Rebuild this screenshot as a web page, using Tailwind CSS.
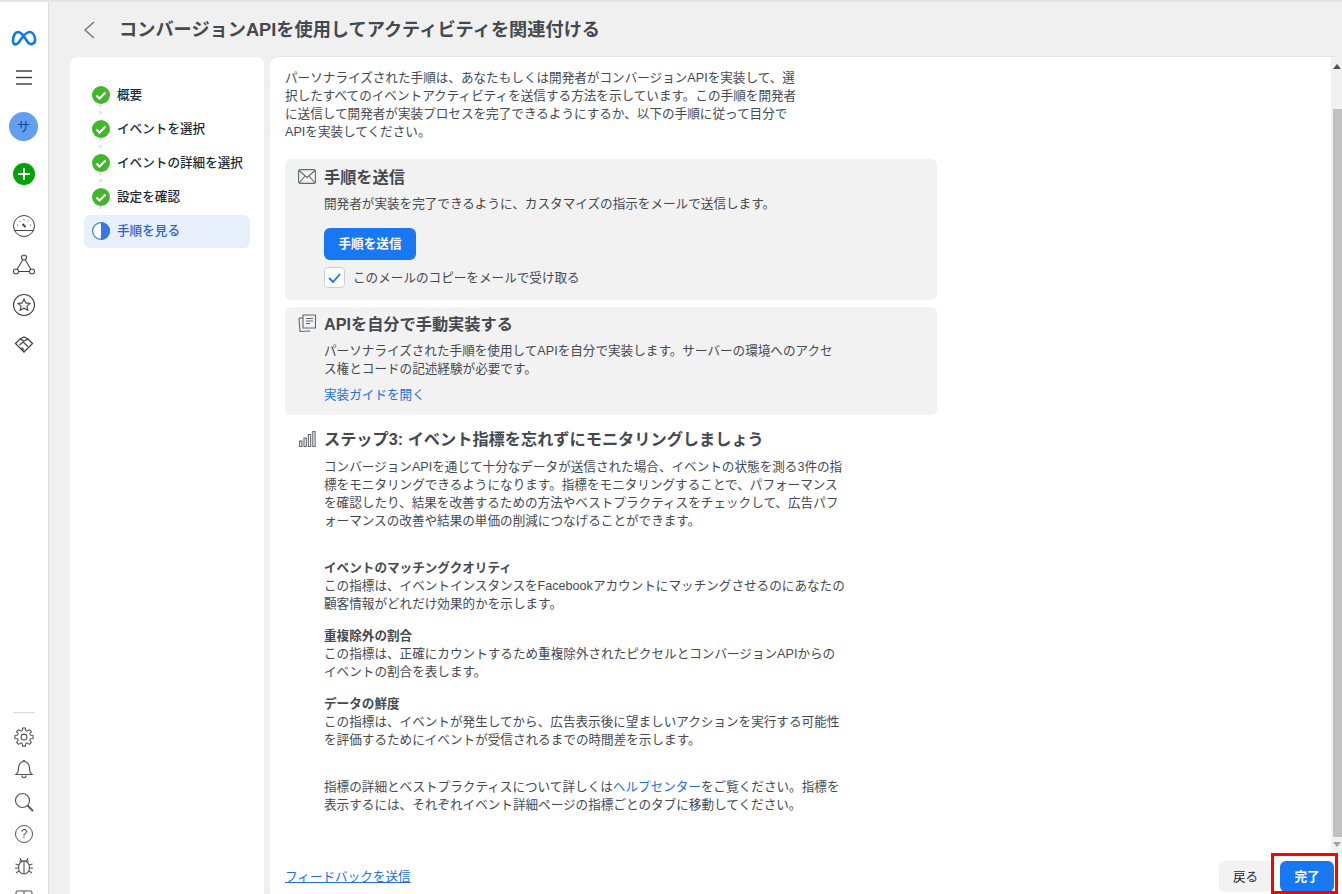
<!doctype html>
<html lang="ja">
<head>
<meta charset="UTF-8">
<title>コンバージョンAPI</title>
<script src="https://cdn.jsdelivr.net/npm/@tailwindcss/browser@4"></script>
</head>
<body class="h-[894px] w-[1342px] overflow-hidden bg-[#f0f0f0] font-['Liberation_Sans','Noto_Sans_CJK_JP',sans-serif] text-[12.6px] leading-[18px] text-[#1c2b33]">
<div class="flex h-full border-t-2 border-[#e4e4e4]">

  <!-- left nav -->
  <nav class="flex w-[49px] shrink-0 flex-col items-center border-r border-[#d9dadb] bg-white">
    <svg class="mt-[28px] h-[16px] w-[26px]" viewBox="0 0 26 16" fill="none" stroke="#0a78f0" stroke-width="2.600"><path d="M2 11C2 5 4.500 2 7 2c3 0 5 3 10 10.500 1.500 1.500 2.500 2 4 1.500 2-.5 3.500-2.500 3-5.500C23.500 4.500 21 2 18.500 2 15 2 12 6 8 12c-1.500 2-2.500 2.500-3.500 2.500C3 14.500 2 13 2 11z"/></svg>
    <svg class="mt-[24px] h-[15px] w-[16px]" viewBox="0 0 16 15" stroke="#444" stroke-width="1.600"><path d="M0 1h16M0 7.500h16M0 14h16"/></svg>
    <div class="mt-[27px] mr-px flex h-[29px] w-[29px] items-center justify-center rounded-full bg-[#629ff0] text-[13px] text-[#0c4a9a]">サ</div>
    <div class="mt-[22px] flex h-[22px] w-[22px] items-center justify-center rounded-full bg-[#00a400]">
      <svg class="h-[12px] w-[12px]" viewBox="0 0 12 12" stroke="#fff" stroke-width="2"><path d="M6 0v12M0 6h12"/></svg>
    </div>
    <svg class="mt-[29px] h-[24px] w-[24px]" viewBox="0 0 24 24" fill="none" stroke="#444" stroke-width="1"><circle cx="12" cy="12" r="10.500"/><path d="M2 16.500h20"/><path d="M10.500 10l3 3" stroke-width="2"/><path d="M5 11l1 .3M7.500 7l.8.8M12 5v1M16.500 7l-.8.8M19 11l-1 .3"/></svg>
    <svg class="mt-[15px] h-[24px] w-[24px]" viewBox="0 0 24 24" fill="none" stroke="#444" stroke-width="1.100"><circle cx="12" cy="4.500" r="2.500"/><circle cx="4" cy="18.500" r="2.500"/><circle cx="20" cy="18.500" r="2.500"/><path d="M10.800 6.700L5.200 16.300M13.200 6.700l5.600 9.600M6.500 18.500h11"/></svg>
    <svg class="mt-[16px] h-[24px] w-[24px]" viewBox="0 0 24 24" fill="none" stroke="#444" stroke-width="1.100"><circle cx="12" cy="12" r="10.500"/><path d="M12 6l1.800 3.900 4.200.5-3.100 2.800.9 4.100-3.800-2.100-3.800 2.100.9-4.100L6 10.400l4.200-.5z"/></svg>
    <svg class="mt-[17px] h-[22px] w-[22px]" viewBox="0 0 22 22" fill="none" stroke="#444" stroke-width="1.300"><path d="M2.500 9.500L7 5l4 2 4-2 4.500 4.500L11 18z"/><path d="M7 5l4-2 4 2M6.500 11L10 8l5 4.500M8.500 13.500L11 16"/></svg>

    <div class="mt-auto mb-[-12px] flex flex-col items-center">
      <div class="mb-[14px] h-px w-[22px] bg-[#d9dadb]"></div>
      <svg class="h-[20px] w-[20px]" viewBox="0 0 24 24" fill="none" stroke="#555" stroke-width="1.300" stroke-linejoin="round"><circle cx="12" cy="12" r="3.500"/><path d="M9.800 4.300L10.300 1.100H13.700L14.200 4.300 15.900 5 18.500 3.100 20.900 5.500 19 8.100 19.700 9.800 22.900 10.300V13.700L19.700 14.200 19 15.900 20.900 18.500 18.500 20.900 15.900 19 14.200 19.700 13.700 22.900H10.300L9.800 19.700 8.100 19 5.500 20.900 3.100 18.500 5 15.900 4.300 14.200 1.100 13.700V10.300L4.300 9.800 5 8.100 3.100 5.500 5.500 3.100 8.100 5z"/></svg>
      <svg class="mt-[12px] h-[20px] w-[20px]" viewBox="0 0 20 20" fill="none" stroke="#555" stroke-width="1.200"><path d="M2 15.500c2-1.500 2.500-3 2.500-6.500 0-3.500 2.500-6.500 5.500-6.500s5.500 3 5.500 6.500c0 3.500.5 5 2.500 6.500z"/><path d="M8 16.500c0 1.500 1 2.200 2 2.200s2-.7 2-2.200M9 2.500a1 1 0 0 1 2 0"/></svg>
      <svg class="mt-[13px] h-[20px] w-[20px]" viewBox="0 0 20 20" fill="none" stroke="#555" stroke-width="1.200"><circle cx="8.500" cy="8.500" r="7"/><path d="M13.500 13.500L19 19" stroke-width="1.800"/></svg>
      <div class="mt-[13px] flex h-[18px] w-[18px] items-center justify-center rounded-full border border-[#555] text-[12px] leading-none text-[#555]">?</div>
      <svg class="mt-[13px] h-[20px] w-[20px]" viewBox="0 0 20 20" fill="none" stroke="#555" stroke-width="1.100"><ellipse cx="10" cy="11.500" rx="5.500" ry="6.500"/><path d="M10 6v12M5 5h10M6 2l1.500 3M14 2l-1.500 3M1.500 8l3.500 1M18.500 8L15 9M1 12h3.500M19 12h-3.500M2 17l3-2M18 17l-3-2"/></svg>
      <svg class="mt-[14px] h-[16px] w-[20px]" viewBox="0 0 20 16" fill="none" stroke="#555" stroke-width="1.100"><rect x="2" y="1" width="16" height="14" rx="1.500"/><path d="M10 1v14M2 5h16"/></svg>
    </div>
  </nav>

  <!-- page -->
  <div class="flex min-w-0 flex-1 flex-col">
    <header class="flex h-[55px] shrink-0 items-center pl-[34px]">
      <svg class="h-[18px] w-[12px]" viewBox="0 0 12 18" fill="none" stroke="#6b7075" stroke-width="1.300"><path d="M11 1L2 9l9 8"/></svg>
      <h1 class="ml-[24px] text-[18.2px] font-bold text-[#444950]">コンバージョンAPIを使用してアクティビティを関連付ける</h1>
    </header>

    <div class="flex min-h-0 flex-1 pl-[21px]">
      <!-- steps -->
      <aside class="w-[194px] shrink-0 rounded-t-lg bg-white pl-[14px] pr-[14px] pt-[21px]">
        <ul class="font-medium">
          <li class="relative flex h-[34px] items-center gap-[7px] pl-[8px]">
            <svg class="h-[18px] w-[18px]" viewBox="0 0 18 18"><circle cx="9" cy="9" r="9" fill="#42b72a"/><path d="M4.500 9.500l3 3 6-6" fill="none" stroke="#fff" stroke-width="2"/></svg>概要
            <span class="absolute top-[26px] left-[15px] h-[3px] w-[3px] rounded-full bg-[#dcdee0]"></span>
            <span class="absolute top-[33px] left-[15px] h-[3px] w-[3px] rounded-full bg-[#dcdee0]"></span>
          </li>
          <li class="relative flex h-[34px] items-center gap-[7px] pl-[8px]">
            <svg class="h-[18px] w-[18px]" viewBox="0 0 18 18"><circle cx="9" cy="9" r="9" fill="#42b72a"/><path d="M4.500 9.500l3 3 6-6" fill="none" stroke="#fff" stroke-width="2"/></svg>イベントを選択
            <span class="absolute top-[26px] left-[15px] h-[3px] w-[3px] rounded-full bg-[#dcdee0]"></span>
            <span class="absolute top-[33px] left-[15px] h-[3px] w-[3px] rounded-full bg-[#dcdee0]"></span>
          </li>
          <li class="relative flex h-[34px] items-center gap-[7px] pl-[8px]">
            <svg class="h-[18px] w-[18px]" viewBox="0 0 18 18"><circle cx="9" cy="9" r="9" fill="#42b72a"/><path d="M4.500 9.500l3 3 6-6" fill="none" stroke="#fff" stroke-width="2"/></svg>イベントの詳細を選択
            <span class="absolute top-[26px] left-[15px] h-[3px] w-[3px] rounded-full bg-[#dcdee0]"></span>
            <span class="absolute top-[33px] left-[15px] h-[3px] w-[3px] rounded-full bg-[#dcdee0]"></span>
          </li>
          <li class="relative flex h-[34px] items-center gap-[7px] pl-[8px]">
            <svg class="h-[18px] w-[18px]" viewBox="0 0 18 18"><circle cx="9" cy="9" r="9" fill="#42b72a"/><path d="M4.500 9.500l3 3 6-6" fill="none" stroke="#fff" stroke-width="2"/></svg>設定を確認
            <span class="absolute top-[26px] left-[15px] h-[3px] w-[3px] rounded-full bg-[#dcdee0]"></span>
          </li>
          <li class="mt-px flex h-[33px] items-center gap-[7px] rounded-md bg-[#e7f0fb] pb-[2px] pl-[8px] text-[#2b63d8]">
            <svg class="h-[18px] w-[18px]" viewBox="0 0 18 18"><circle cx="9" cy="9" r="8.400" fill="#fff" stroke="#3578e5" stroke-width="1.200"/><path d="M9 0a9 9 0 0 1 0 18z" fill="#3578e5"/></svg>手順を見る
          </li>
        </ul>
      </aside>

      <!-- content -->
      <main class="relative ml-[6px] flex min-w-0 flex-1 flex-col rounded-t-lg bg-white shadow-[0_-1px_2px_rgba(0,0,0,0.06)]">
        <div class="min-h-0 flex-1 overflow-hidden pl-[15px] pt-[12px]">
          <p class="text-[#444950]">パーソナライズされた手順は、あなたもしくは開発者がコンバージョンAPIを実装して、選<br>択したすべてのイベントアクティビティを送信する方法を示しています。この手順を開発者<br>に送信して開発者が実装プロセスを完了できるようにするか、以下の手順に従って目分で<br>APIを実装してください。</p>

          <section class="mt-[18px] h-[141px] w-[652px] rounded-md bg-[#f2f2f2] pl-[39px] pt-[7px] text-[#444950]">
            <h2 class="relative text-[16.2px] leading-[22px] font-bold">
              <svg class="absolute top-[3px] left-[-26px] h-[15px] w-[18px]" viewBox="0 0 18 15" fill="none" stroke="#606770" stroke-width="1.100"><rect x=".6" y=".6" width="16.800" height="13.800" rx="1.500"/><path d="M1 1.500l8 7 8-7M1 14l6-7M17 14l-6-7"/></svg>手順を送信
            </h2>
            <p class="mt-[7px]">開発者が実装を完了できるように、カスタマイズの指示をメールで送信します。</p>
            <button class="mt-[15px] block h-[32px] w-[92px] rounded-md bg-[#1877f2] font-bold text-white">手順を送信</button>
            <label class="mt-[7px] flex items-center gap-[8px]">
              <span class="flex h-[21px] w-[21px] items-center justify-center rounded-[4px] border border-[#ccd0d5] bg-white">
                <svg class="h-[10px] w-[13px]" viewBox="0 0 13 10" fill="none" stroke="#1877f2" stroke-width="1.800"><path d="M1 5l4 4 7-8"/></svg>
              </span>このメールのコピーをメールで受け取る
            </label>
          </section>

          <section class="mt-[7px] h-[108px] w-[652px] rounded-md bg-[#f2f2f2] pl-[39px] pt-[6px] text-[#444950]">
            <h2 class="relative text-[16.2px] leading-[22px] font-bold">
              <svg class="absolute top-[1px] left-[-26px] h-[19px] w-[19px]" viewBox="0 0 19 19" fill="none" stroke="#606770" stroke-width="1.100"><path d="M5 1h12.500v13H5z"/><path d="M8 4.500h7M8 7h7M8 9.500h4"/><path d="M5 3.500L1 4.500l1 13 10-.5"/></svg>APIを自分で手動実装する
            </h2>
            <p class="mt-[7px]">パーソナライズされた手順を使用してAPIを自分で実装します。サーバーの環境へのアクセ<br>ス権とコードの記述経験が必要です。</p>
            <a class="mt-[8px] block text-[#216fdb]">実装ガイドを開く</a>
          </section>

          <section class="mt-[13px] w-[652px] pl-[39px] text-[#444950]">
            <h2 class="relative text-[16.2px] leading-[22px] font-bold">
              <svg class="absolute top-[3px] left-[-25px] h-[16px] w-[17px]" viewBox="0 0 17 16" fill="none" stroke="#606770" stroke-width="1.100"><rect x=".6" y="10" width="2.300" height="5.500"/><rect x="5" y="7" width="2.300" height="8.500"/><rect x="9.400" y="3.500" width="2.300" height="12"/><rect x="13.800" y=".6" width="2.300" height="14.900"/></svg>ステップ3: イベント指標を忘れずにモニタリングしましょう
            </h2>
            <p class="mt-[8px]">コンバージョンAPIを通じて十分なデータが送信された場合、イベントの状態を測る3件の指<br>標をモニタリングできるようになります。指標をモニタリングすることで、パフォーマンス<br>を確認したり、結果を改善するための方法やベストプラクティスをチェックして、広告パフ<br>ォーマンスの改善や結果の単価の削減につなげることができます。</p>
            <h3 class="mt-[29px] font-bold">イベントのマッチングクオリティ</h3>
            <p>この指標は、イベントインスタンスをFacebookアカウントにマッチングさせるのにあなたの<br>顧客情報がどれだけ効果的かを示します。</p>
            <h3 class="mt-[14px] font-bold">重複除外の割合</h3>
            <p>この指標は、正確にカウントするため重複除外されたピクセルとコンバージョンAPIからの<br>イベントの割合を表します。</p>
            <h3 class="mt-[14px] font-bold">データの鮮度</h3>
            <p>この指標は、イベントが発生してから、広告表示後に望ましいアクションを実行する可能性<br>を評価するためにイベントが受信されるまでの時間差を示します。</p>
            <p class="mt-[29px]">指標の詳細とベストプラクティスについて詳しくは<a class="text-[#216fdb]">ヘルプセンター</a>をご覧ください。指標を<br>表示するには、それぞれイベント詳細ページの指標ごとのタブに移動してください。</p>
          </section>
        </div>

        <!-- scrollbar -->
        <div class="absolute top-0 right-0 flex h-[796px] w-[11px] flex-col items-end bg-[#f1f1f1]">
          <div class="mt-[7px] mr-[1px] h-0 w-0 border-x-[4px] border-b-[5px] border-x-transparent border-b-[#505050]"></div>
          <div class="mt-[40px] h-[728px] w-[9px] bg-[#c1c1c1]"></div>
          <div class="mt-[5px] mr-[1px] h-0 w-0 border-x-[4px] border-t-[5px] border-x-transparent border-t-[#a0a0a0]"></div>
        </div>

        <footer class="flex h-[40px] shrink-0 items-start pl-[15px] pt-[7px] pr-[8px]">
          <a class="mt-[7px] text-[#216fdb] underline">フィードバックを送信</a>
          <button class="ml-auto h-[31px] w-[53px] rounded-md bg-[#f2f2f2] text-[#1c2b33]">戻る</button>
          <button class="ml-[8px] h-[31px] w-[54px] rounded-md bg-[#1877f2] font-bold text-white">完了</button>
        </footer>

        <div class="absolute right-[4px] bottom-0 h-[41px] w-[67px] border-[3px] border-[#ff0000]"></div>
      </main>
    </div>
  </div>
</div>
</body>
</html>
